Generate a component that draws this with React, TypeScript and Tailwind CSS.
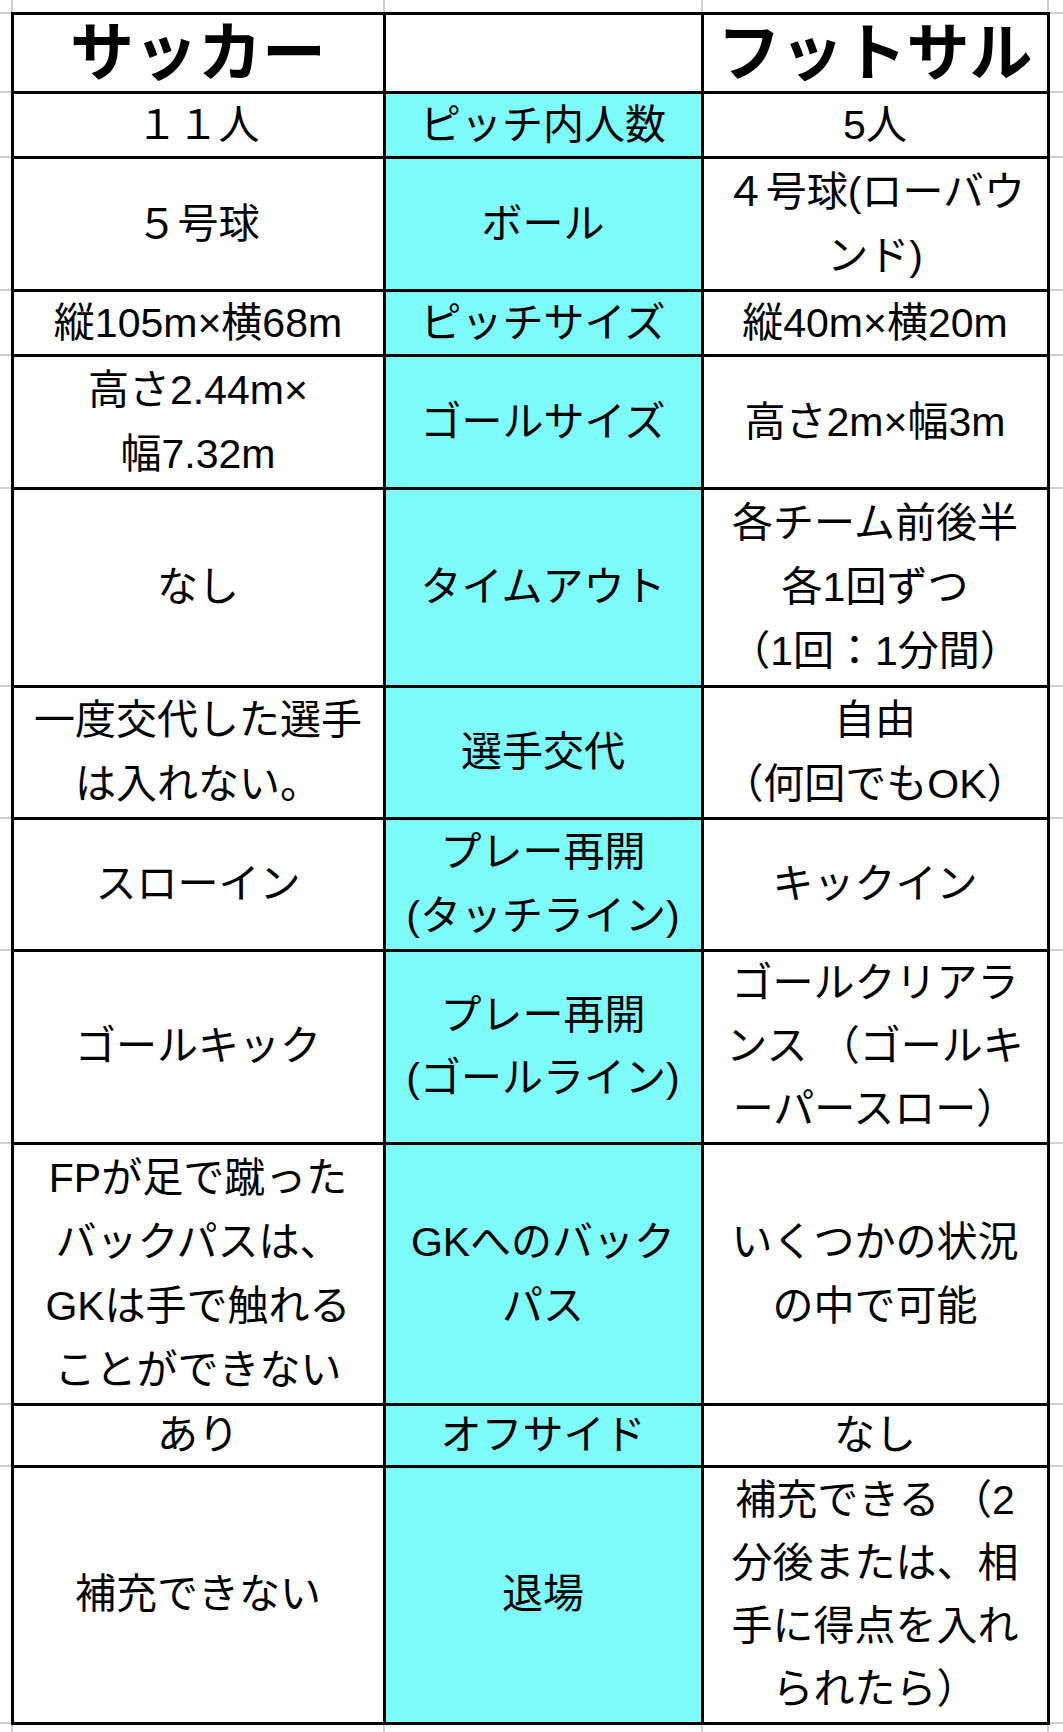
const grid = 'border-2 border-[#d0d0d0] p-0';
const cell = 'border-[3px] border-black p-0 text-center align-middle text-black text-[41px]';

type Row = { h: string; line?: string; left: string[]; mid: string[]; right: string[] };

// row heights include the shared borders, so each line is kept a few px under h / lines
const rows: Row[] = [
  { h: 'h-[65px]', line: 'h-[62px] leading-[62px]', left: ['１１人'], mid: ['ピッチ内人数'], right: ['5人'] },
  { h: 'h-[133px]', left: ['５号球'], mid: ['ボール'], right: ['４号球(ローバウ', 'ンド)'] },
  { h: 'h-[65px]', line: 'h-[62px] leading-[62px]', left: ['縦105m×横68m'], mid: ['ピッチサイズ'], right: ['縦40m×横20m'] },
  { h: 'h-[133px]', left: ['高さ2.44m×', '幅7.32m'], mid: ['ゴールサイズ'], right: ['高さ2m×幅3m'] },
  { h: 'h-[198px]', left: ['なし'], mid: ['タイムアウト'], right: ['各チーム前後半', '各1回ずつ', '（1回：1分間）'] },
  { h: 'h-[132px]', left: ['一度交代した選手', 'は入れない。'], mid: ['選手交代'], right: ['自由', '（何回でもOK）'] },
  { h: 'h-[132px]', left: ['スローイン'], mid: ['プレー再開', '(タッチライン)'], right: ['キックイン'] },
  {
    h: 'h-[193px]',
    line: 'h-[63px] leading-[63px]',
    left: ['ゴールキック'],
    mid: ['プレー再開', '(ゴールライン)'],
    right: ['ゴールクリアラ', 'ンス （ゴールキ', 'ーパースロー）'],
  },
  {
    h: 'h-[261px]',
    left: ['FPが足で蹴った', 'バックパスは、', 'GKは手で触れる', 'ことができない'],
    mid: ['GKへのバック', 'パス'],
    right: ['いくつかの状況', 'の中で可能'],
  },
  { h: 'h-[62px]', line: 'h-[58px] leading-[58px]', left: ['あり'], mid: ['オフサイド'], right: ['なし'] },
  {
    h: 'h-[257px]',
    line: 'h-[63px] leading-[63px]',
    left: ['補充できない'],
    mid: ['退場'],
    right: ['補充できる （2', '分後または、相', '手に得点を入れ', 'られたら）'],
  },
];

function Lines({ lines, line }: { lines: string[]; line: string }) {
  return (
    <>
      {lines.map((l) => (
        <div key={l} className={`whitespace-nowrap ${line}`}>
          {l}
        </div>
      ))}
    </>
  );
}

export default function App() {
  return (
    <div className="w-[1063px] h-[1732px] overflow-hidden bg-white font-['Liberation_Sans','Noto_Sans_CJK_JP',sans-serif]">
      <table className="table-fixed border-collapse w-[1063px]">
        <colgroup>
          <col className="w-[12px]" />
          <col className="w-[372px]" />
          <col className="w-[318px]" />
          <col className="w-[346px]" />
          <col className="w-[15px]" />
        </colgroup>
        <tbody>
          {/* spreadsheet grid above the table */}
          <tr className="h-[13px]">
            <td className={`${grid} border-t-0 border-l-0`} />
            <td className={`${grid} border-t-0`} />
            <td className={`${grid} border-t-0`} />
            <td className={`${grid} border-t-0`} />
            <td className={`${grid} border-t-0 border-r-0`} />
          </tr>

          <tr className="h-[79px]">
            <td className={`${grid} border-l-0`} />
            <td className={`${cell} text-[64px] font-bold`}>
              <div className="h-[74px] leading-[74px] whitespace-nowrap">サッカー</div>
            </td>
            <td className={cell} />
            <td className={`${cell} text-[63px] font-bold`}>
              <div className="h-[74px] leading-[74px] whitespace-nowrap">フットサル</div>
            </td>
            <td className={`${grid} border-r-0`} />
          </tr>

          {rows.map((r) => {
            const line = r.line ?? 'h-[64px] leading-[64px]';
            return (
              <tr key={r.mid.join('')} className={r.h}>
                <td className={`${grid} border-l-0`} />
                <td className={cell}>
                  <Lines lines={r.left} line={line} />
                </td>
                <td className={`${cell} bg-[#7dfbfb]`}>
                  <Lines lines={r.mid} line={line} />
                </td>
                <td className={cell}>
                  <Lines lines={r.right} line={line} />
                </td>
                <td className={`${grid} border-r-0`} />
              </tr>
            );
          })}

          {/* spreadsheet grid below the table */}
          <tr className="h-[9px]">
            <td className={`${grid} border-b-0 border-l-0`} />
            <td className={`${grid} border-b-0`} />
            <td className={`${grid} border-b-0`} />
            <td className={`${grid} border-b-0`} />
            <td className={`${grid} border-b-0 border-r-0`} />
          </tr>
        </tbody>
      </table>
    </div>
  );
}
